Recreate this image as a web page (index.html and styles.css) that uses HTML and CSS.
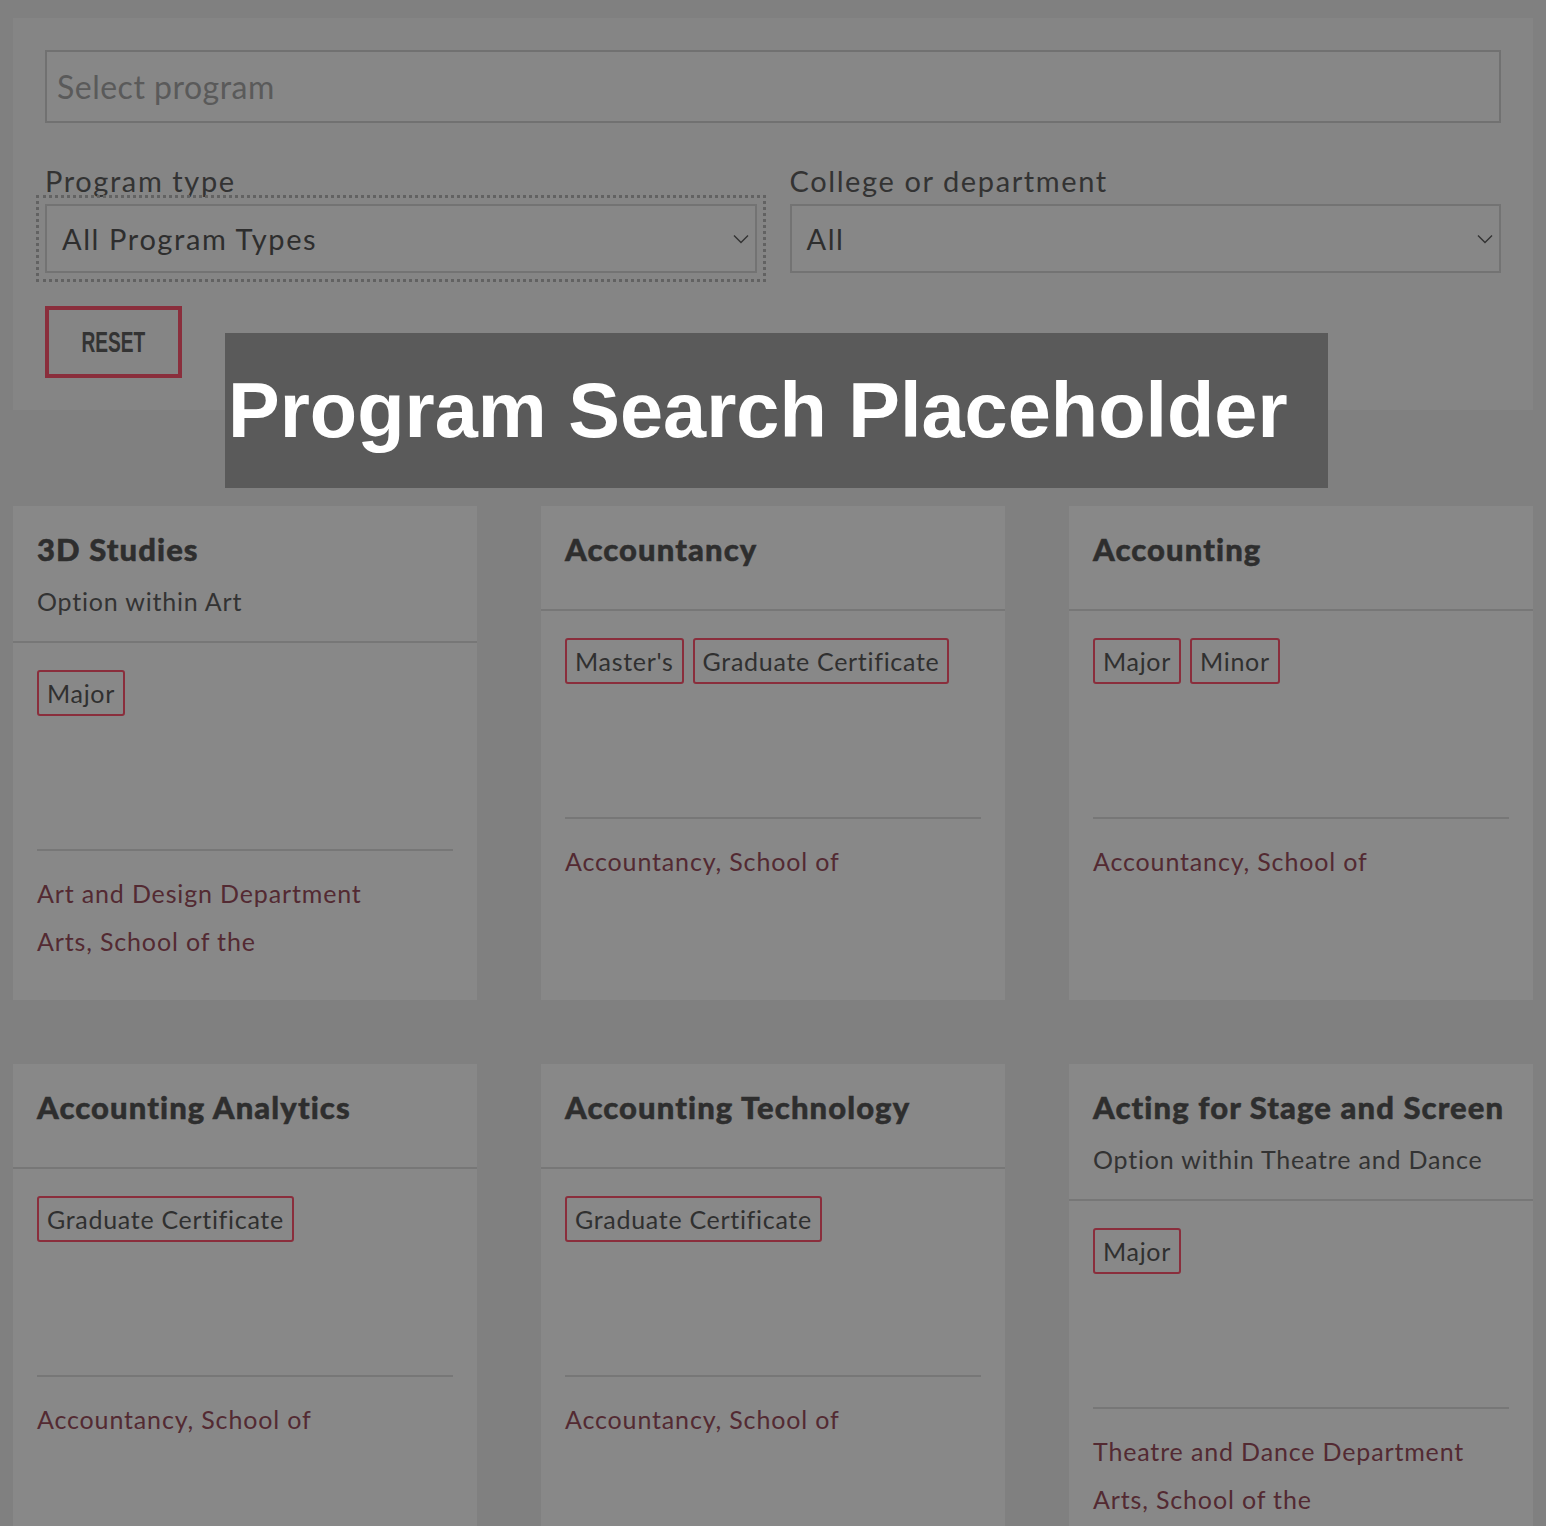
FILE: index.html
```html
<!DOCTYPE html>
<html lang="en">
<head>
<meta charset="utf-8">
<title>Program Search</title>
<link rel="stylesheet" href="styles.css">
</head>
<body>
<div class="page">
  <section class="filters">
    <input class="search" type="text" placeholder="Select program">
    <div class="filter-row">
      <div class="field">
        <label class="field-label">Program type</label>
        <div class="select-wrap focused">
          <div class="select">All Program Types</div>
          <svg class="chevron" viewBox="0 0 16 10" width="16" height="10"><path d="M1 1.5 L8 8.5 L15 1.5" fill="none" stroke="#333" stroke-width="1.4"/></svg>
        </div>
      </div>
      <div class="field">
        <label class="field-label">College or department</label>
        <div class="select-wrap">
          <div class="select">All</div>
          <svg class="chevron" viewBox="0 0 16 10" width="16" height="10"><path d="M1 1.5 L8 8.5 L15 1.5" fill="none" stroke="#333" stroke-width="1.4"/></svg>
        </div>
      </div>
    </div>
    <button class="reset"><span>RESET</span></button>
  </section>

  <div class="placeholder-banner">Program Search Placeholder</div>

  <section class="cards">
    <article class="card">
      <header class="card-head">
        <h2 class="card-title">3D Studies</h2>
        <p class="card-sub">Option within Art</p>
      </header>
      <div class="card-body">
        <div class="tags"><span class="tag">Major</span></div>
        <div class="links">
          <a class="link">Art and Design Department</a>
          <a class="link">Arts, School of the</a>
        </div>
      </div>
    </article>
    <article class="card">
      <header class="card-head">
        <h2 class="card-title">Accountancy</h2>
      </header>
      <div class="card-body">
        <div class="tags"><span class="tag">Master's</span><span class="tag">Graduate Certificate</span></div>
        <div class="links">
          <a class="link">Accountancy, School of</a>
        </div>
      </div>
    </article>
    <article class="card">
      <header class="card-head">
        <h2 class="card-title">Accounting</h2>
      </header>
      <div class="card-body">
        <div class="tags"><span class="tag">Major</span><span class="tag">Minor</span></div>
        <div class="links">
          <a class="link">Accountancy, School of</a>
        </div>
      </div>
    </article>
    <article class="card">
      <header class="card-head">
        <h2 class="card-title">Accounting Analytics</h2>
      </header>
      <div class="card-body">
        <div class="tags"><span class="tag">Graduate Certificate</span></div>
        <div class="links">
          <a class="link">Accountancy, School of</a>
        </div>
      </div>
    </article>
    <article class="card">
      <header class="card-head">
        <h2 class="card-title">Accounting Technology</h2>
      </header>
      <div class="card-body">
        <div class="tags"><span class="tag">Graduate Certificate</span></div>
        <div class="links">
          <a class="link">Accountancy, School of</a>
        </div>
      </div>
    </article>
    <article class="card">
      <header class="card-head">
        <h2 class="card-title">Acting for Stage and Screen</h2>
        <p class="card-sub">Option within Theatre and Dance</p>
      </header>
      <div class="card-body">
        <div class="tags"><span class="tag">Major</span></div>
        <div class="links">
          <a class="link">Theatre and Dance Department</a>
          <a class="link">Arts, School of the</a>
        </div>
      </div>
    </article>
  </section>
</div>
</body>
</html>
```

FILE: styles.css
```css
* { box-sizing: border-box; }

html, body {
  margin: 0;
  padding: 0;
  background: #808080;
}

body {
  font-family: "Lato", "Noto Sans", sans-serif;
  color: #303030;
}

.page {
  position: relative;
  padding: 18px 13px 40px;
}

/* Filter panel */
.filters {
  background: #858585;
  padding: 32px;
  display: flex;
  flex-direction: column;
}

.search {
  height: 73px;
  width: 100%;
  border: 2px solid #717171;
  background: #878787;
  font-family: inherit;
  font-size: 32px;
  letter-spacing: 0.5px;
  padding: 0 10px;
  color: #333;
  outline: none;
}
.search::placeholder { color: #5a5a5a; }

.filter-row {
  display: grid;
  grid-template-columns: 1fr 1fr;
  column-gap: 33px;
  margin-top: 40px;
}

.field { display: flex; flex-direction: column; }

.field-label {
  font-size: 29px;
  letter-spacing: 1.6px;
  line-height: 36px;
  margin-bottom: 5px;
  color: #333;
}

.select-wrap {
  position: relative;
  height: 69px;
}
.select-wrap.focused {
  outline: 3px dotted #626262;
  outline-offset: 6px;
}

.select {
  height: 69px;
  border: 2px solid #737373;
  background: #878787;
  font-size: 29px;
  letter-spacing: 1.6px;
  line-height: 65px;
  padding-left: 15px;
  color: #2e2e2e;
}

.chevron {
  position: absolute;
  right: 8px;
  top: 30px;
}

.reset {
  align-self: flex-start;
  margin-top: 33px;
  width: 137px;
  height: 72px;
  border: 4px solid #8a2e3c;
  background: transparent;
  padding: 0;
  font-family: "Liberation Sans", Arial, sans-serif;
  font-weight: 700;
  font-size: 29px;
  color: #333;
  display: flex;
  align-items: center;
  justify-content: center;
}
.reset span {
  display: inline-block;
  transform: scaleX(0.66);
}

/* Placeholder overlay banner */
.placeholder-banner {
  position: absolute;
  left: 225px;
  top: 333px;
  width: 1103px;
  height: 155px;
  padding-left: 3px;
  background: #5a5a5a;
  color: #fff;
  font-family: "Liberation Sans", Arial, sans-serif;
  font-weight: 700;
  font-size: 77.5px;
  line-height: 155px;
  white-space: nowrap;
  overflow: hidden;
}

/* Cards */
.cards {
  margin-top: 96px;
  display: grid;
  grid-template-columns: repeat(3, 1fr);
  column-gap: 64px;
  row-gap: 64px;
}

.card {
  background: #888888;
  padding-bottom: 35px;
}

.card-head {
  padding: 24px 24px 24px;
  border-bottom: 2px solid #777;
}

.card-title {
  margin: 0 0 17px;
  font-size: 31px;
  letter-spacing: 1.1px;
  line-height: 38px;
  font-weight: 900;
  color: #2e2e2e;
  -webkit-text-stroke: 0.5px #2e2e2e;
}

.card-sub {
  margin: 0;
  font-size: 25px;
  letter-spacing: 0.8px;
  line-height: 32px;
  color: #333;
}

.card-body { padding: 0 24px; }

.tags {
  display: flex;
  flex-wrap: wrap;
  gap: 9px;
  padding-top: 27px;
  min-height: 208px;
  align-content: flex-start;
  border-bottom: 2px solid #777;
}

.tag {
  display: inline-block;
  height: 46px;
  line-height: 42px;
  padding: 0 8px;
  border: 2px solid #8a2e3c;
  border-radius: 3px;
  font-size: 25px;
  letter-spacing: 0.7px;
  color: #303030;
}

.links {
  padding-top: 18px;
  display: flex;
  flex-direction: column;
}

.link {
  font-size: 25px;
  letter-spacing: 0.85px;
  line-height: 48px;
  color: #532a32;
  text-decoration: none;
}
```
